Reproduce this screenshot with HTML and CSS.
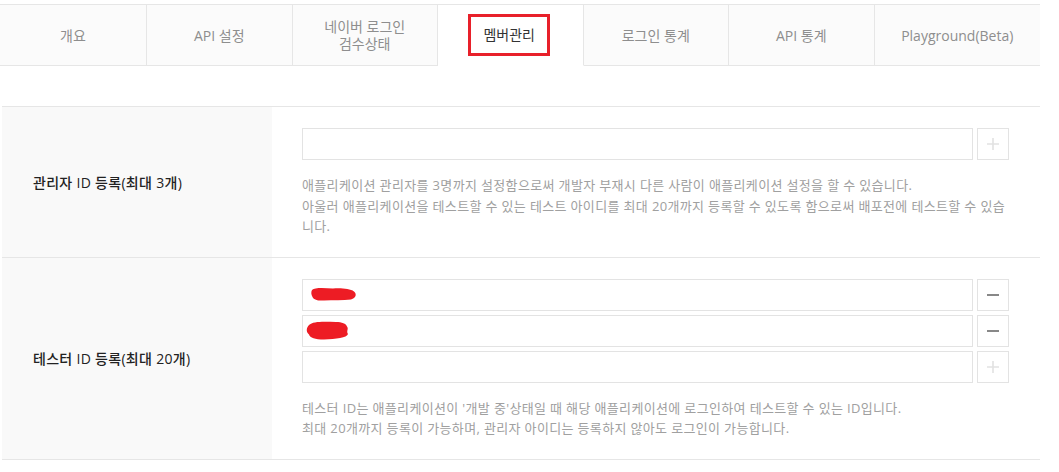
FILE: index.html
```html
<!DOCTYPE html>
<html lang="ko">
<head>
<meta charset="utf-8">
<title>멤버관리</title>
<link rel="stylesheet" href="styles.css">
</head>
<body>
<ul class="tabs">
  <li class="tab">개요</li>
  <li class="tab">API 설정</li>
  <li class="tab tab-two">네이버 로그인<br>검수상태</li>
  <li class="tab tab-active"><span class="mark">멤버관리</span></li>
  <li class="tab">로그인 통계</li>
  <li class="tab">API 통계</li>
  <li class="tab">Playground(Beta)</li>
</ul>

<div class="form">
  <div class="row">
    <div class="label">관리자 ID 등록(최대 3개)</div>
    <div class="content">
      <div class="field">
        <div class="input"></div>
        <div class="btn">
          <svg width="14" height="14" viewBox="0 0 14 14"><path d="M7 1V13M1 7H13" stroke="#e2e2e2" stroke-width="1.6"/></svg>
        </div>
      </div>
      <p class="desc">애플리케이션 관리자를 3명까지 설정함으로써 개발자 부재시 다른 사람이 애플리케이션 설정을 할 수 있습니다.<br>아울러 애플리케이션을 테스트할 수 있는 테스트 아이디를 최대 20개까지 등록할 수 있도록 함으로써 배포전에 테스트할 수 있습니다.</p>
    </div>
  </div>

  <div class="row">
    <div class="label">테스터 ID 등록(최대 20개)</div>
    <div class="content">
      <div class="field">
        <div class="input">
          <svg class="blob blob1" width="46" height="15" viewBox="0 0 46 15"><path d="M1 3 C4 0 14 1 22 1.5 C30 1 39 1.5 43 4.5 C46 7 45 11 40 12.5 C32 13.5 22 13 13 13.5 C8 14 3 13 1.5 10 C0 7 0 5 1 3Z" fill="#ed1c24"/></svg>
        </div>
        <div class="btn">
          <svg width="12" height="12" viewBox="0 0 12 12"><path d="M0 6H12" stroke="#555" stroke-width="1.4"/></svg>
        </div>
      </div>
      <div class="field">
        <div class="input">
          <svg class="blob blob2" width="45" height="19" viewBox="0 0 45 19"><path d="M3 4 C7 0 18 0.5 30 1 C36 1 40 2.5 41 5.5 C43 8 40 10 42 13 C41 17 30 18 18 18.5 C9 18.5 4 17 3 13.5 C0 11 0 7 3 4Z" fill="#ed1c24"/></svg>
        </div>
        <div class="btn">
          <svg width="12" height="12" viewBox="0 0 12 12"><path d="M0 6H12" stroke="#555" stroke-width="1.4"/></svg>
        </div>
      </div>
      <div class="field">
        <div class="input"></div>
        <div class="btn">
          <svg width="14" height="14" viewBox="0 0 14 14"><path d="M7 1V13M1 7H13" stroke="#e2e2e2" stroke-width="1.6"/></svg>
        </div>
      </div>
      <p class="desc">테스터 ID는 애플리케이션이 '개발 중'상태일 때 해당 애플리케이션에 로그인하여 테스트할 수 있는 ID입니다.<br>최대 20개까지 등록이 가능하며, 관리자 아이디는 등록하지 않아도 로그인이 가능합니다.</p>
    </div>
  </div>
</div>
</body>
</html>
```

FILE: styles.css
```css
* {
  box-sizing: border-box;
}

body {
  margin: 0;
  background: #ffffff;
  font-family: "Open Sans", "Noto Sans CJK KR", sans-serif;
  color: #333333;
}

.tabs {
  display: flex;
  width: 1040px;
  margin: 4px 0 0 0;
  padding: 0;
  list-style: none;
  border-top: 1px solid #e6e6e6;
}

.tab {
  flex: 0 0 145.5px;
  height: 61px;
  display: flex;
  align-items: center;
  justify-content: center;
  text-align: center;
  background: #fbfbfb;
  border-right: 1px solid #e6e6e6;
  border-bottom: 1px solid #e6e6e6;
  font-size: 14px;
  line-height: 17px;
  color: #8e8e8e;
}

.tab:first-child {
  flex-basis: 147px;
}

.tab:last-child {
  flex: 1 1 auto;
  border-right: 0;
}

.tab-active {
  background: #ffffff;
  border-bottom-color: #ffffff;
  color: #333333;
}

.mark {
  display: inline-block;
  height: 42px;
  padding: 0 12px;
  margin-left: -2px;
  margin-top: -1px;
  line-height: 36px;
  border: 3px solid #e8202a;
}

.form {
  width: 1038px;
  margin: 40px 0 0 2px;
  border-top: 1px solid #e6e6e6;
}

.row {
  display: grid;
  grid-template-columns: 270px 1fr;
  border-bottom: 1px solid #e6e6e6;
}

.label {
  display: flex;
  align-items: center;
  padding-left: 31px;
  background: #f9f9f9;
  font-size: 14px;
  font-weight: 500;
  color: #222222;
  letter-spacing: 0.3px;
}

.content {
  padding: 21px 31px 20px 30px;
}

.field {
  display: flex;
  gap: 4px;
  margin-bottom: 4px;
}

.field:last-of-type {
  margin-bottom: 0;
}

.input {
  flex: 1 1 auto;
  height: 32px;
  display: flex;
  align-items: center;
  border: 1px solid #e3e3e3;
  background: #ffffff;
}

.btn {
  flex: 0 0 32px;
  height: 32px;
  display: flex;
  align-items: center;
  justify-content: center;
  border: 1px solid #e3e3e3;
  background: #ffffff;
}

.blob {
  display: block;
}

.blob1 {
  margin-left: 8px;
}

.blob2 {
  margin-left: 3px;
}

.desc {
  margin: 15px 0 0 0;
  font-size: 13px;
  line-height: 20.5px;
  color: #a0a0a0;
  letter-spacing: 0.35px;
}
```
